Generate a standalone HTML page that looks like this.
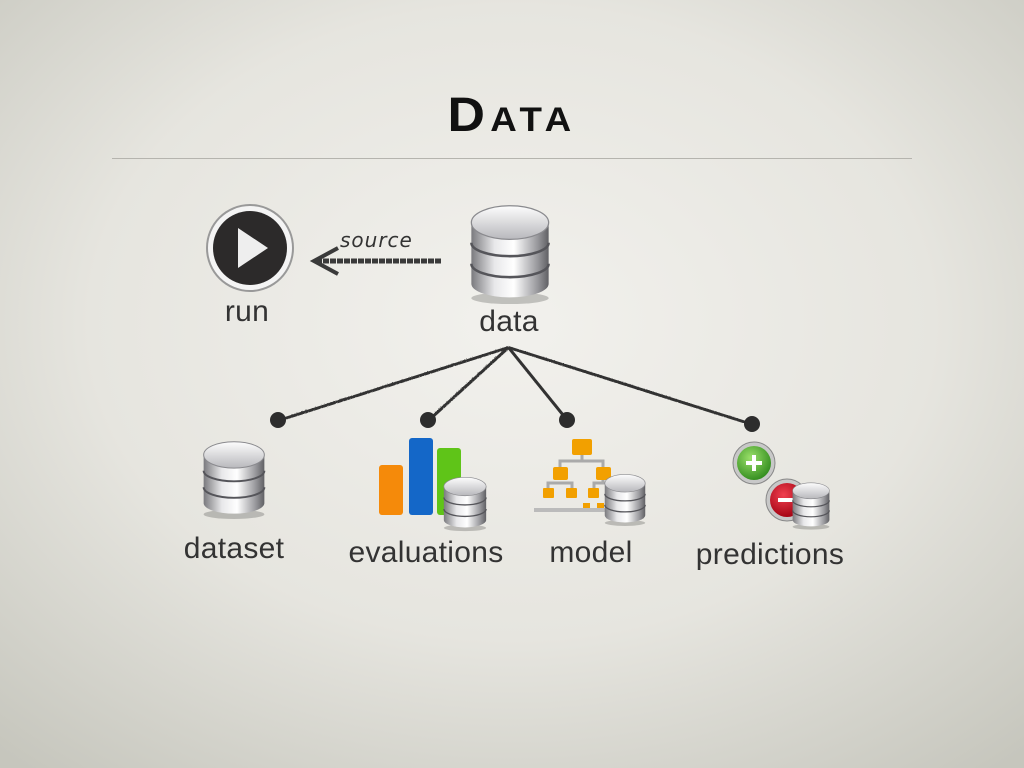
<!DOCTYPE html>
<html><head><meta charset="utf-8"><style>
html,body{margin:0;padding:0}
body{width:1024px;height:768px;overflow:hidden;background:radial-gradient(ellipse 75% 75% at 50% 42%,#f2f1ed 0%,#e6e5df 55%,#c6c6bd 100%);font-family:"Liberation Sans","DejaVu Sans",sans-serif;position:relative}
.t{position:absolute;left:0;width:1024px;text-align:center;top:88px;font-family:"Liberation Sans",sans-serif;font-weight:bold;font-size:48px;font-variant:small-caps;letter-spacing:5px;color:#111;transform:scaleX(1.08)}
.hr{position:absolute;left:112px;width:800px;top:158px;height:1px;background:#b5b4ae}
.l{position:absolute;font-size:30px;color:#333;transform:translateX(-50%);white-space:nowrap;letter-spacing:0.3px}
svg{position:absolute;left:0;top:0}
</style></head><body>
<div class="t">Data</div>
<div class="hr"></div>
<svg width="1024" height="768" viewBox="0 0 1024 768">
<defs>
<linearGradient id="side" x1="0" x2="1"><stop offset="0" stop-color="#7a7a7e"/><stop offset=".3" stop-color="#e8e8ea"/><stop offset=".55" stop-color="#ffffff"/><stop offset=".85" stop-color="#9a9a9e"/><stop offset="1" stop-color="#606064"/></linearGradient>
<linearGradient id="top" x1="0" y1="0" x2="0" y2="1"><stop offset="0" stop-color="#fdfdfd"/><stop offset="1" stop-color="#b8b8bc"/></linearGradient>
<radialGradient id="gr" cx=".4" cy=".35" r=".7"><stop offset="0" stop-color="#9be06a"/><stop offset="1" stop-color="#2f8a1c"/></radialGradient>
<radialGradient id="rd" cx=".4" cy=".35" r=".7"><stop offset="0" stop-color="#f04050"/><stop offset="1" stop-color="#a00010"/></radialGradient>
<symbol id="db" viewBox="0 0 100 120">
<ellipse cx="50" cy="112" rx="46" ry="7" fill="#000" opacity=".2"/>
<path d="M4 22 V95 A46 16 0 0 0 96 95 V22 Z" fill="url(#side)"/>
<path d="M4 46 A46 16 0 0 0 96 46" fill="none" stroke="#55555a" stroke-width="3"/>
<path d="M4 71 A46 16 0 0 0 96 71" fill="none" stroke="#55555a" stroke-width="3"/>
<ellipse cx="50" cy="22" rx="46" ry="20" fill="url(#top)" stroke="#8a8a8e" stroke-width="1.5"/>
</symbol>
<filter id="rough"><feTurbulence baseFrequency=".9" numOctaves="1"/><feDisplacementMap in="SourceGraphic" scale="1.5"/></filter>
</defs>
<circle cx="250" cy="248" r="44" fill="#999"/>
<circle cx="250" cy="248" r="42" fill="#f4f4f4"/>
<circle cx="250" cy="248" r="37" fill="#2c2a2a"/>
<path d="M238 228 L268 248 L238 268 Z" fill="#eee"/>
<text x="340" y="247" font-family="'DejaVu Sans',sans-serif" font-style="italic" font-size="20" fill="#333" letter-spacing="1">source</text>
<path d="M316 261 L442 261" stroke="#3a3a3a" stroke-width="5" stroke-dasharray="6 1"/>
<path d="M338 248 L314 261 L338 274" fill="none" stroke="#3a3a3a" stroke-width="4"/>
<use href="#db" x="468" y="203" width="84" height="103"/>
<g stroke="#333" stroke-width="3" filter="url(#rough)">
<line x1="508" y1="347" x2="278" y2="420"/>
<line x1="508" y1="347" x2="428" y2="420"/>
<line x1="508" y1="347" x2="567" y2="420"/>
<line x1="508" y1="347" x2="752" y2="424"/>
</g>
<g fill="#2d2d2d"><circle cx="278" cy="420" r="8"/><circle cx="428" cy="420" r="8"/><circle cx="567" cy="420" r="8"/><circle cx="752" cy="424" r="8"/></g>
<use href="#db" x="201" y="438" width="66" height="84"/>
<rect x="379" y="465" width="24" height="50" rx="3" fill="#f58a0a"/>
<rect x="409" y="438" width="24" height="77" rx="3" fill="#1467c8"/>
<rect x="437" y="448" width="24" height="67" rx="3" fill="#5fc418"/>
<use href="#db" x="442" y="476" width="46" height="56"/>
<g fill="#f2a000"><rect x="572" y="439" width="20" height="16" rx="2"/><rect x="553" y="467" width="15" height="13" rx="2"/><rect x="596" y="467" width="15" height="13" rx="2"/><rect x="543" y="488" width="11" height="10" rx="1"/><rect x="566" y="488" width="11" height="10" rx="1"/><rect x="588" y="488" width="11" height="10" rx="1"/><rect x="583" y="503" width="7" height="6"/><rect x="597" y="503" width="7" height="6"/></g>
<g stroke="#aaa" stroke-width="3" fill="none"><path d="M582 455 V461 M560 467 V461 H603 V467 M548 488 V483 H572 V488 M594 488 V483 H603 V480"/></g>
<rect x="534" y="508" width="80" height="4" fill="#bbb"/>
<use href="#db" x="603" y="473" width="44" height="54"/>
<circle cx="754" cy="463" r="21" fill="#c8c8c8" stroke="#888"/>
<circle cx="754" cy="463" r="17" fill="url(#gr)"/>
<path d="M746 463 H762 M754 455 V471" stroke="#fff" stroke-width="4"/>
<circle cx="787" cy="500" r="21" fill="#c8c8c8" stroke="#888"/>
<circle cx="787" cy="500" r="17" fill="url(#rd)"/>
<path d="M778 500 H796" stroke="#fff" stroke-width="4"/>
<use href="#db" x="791" y="481" width="40" height="50"/>
</svg>
<div class="l" style="left:247px;top:295px">run</div>
<div class="l" style="left:509px;top:305px">data</div>
<div class="l" style="left:234px;top:532px">dataset</div>
<div class="l" style="left:426px;top:536px">evaluations</div>
<div class="l" style="left:591px;top:536px">model</div>
<div class="l" style="left:770px;top:538px">predictions</div>
</body></html>
